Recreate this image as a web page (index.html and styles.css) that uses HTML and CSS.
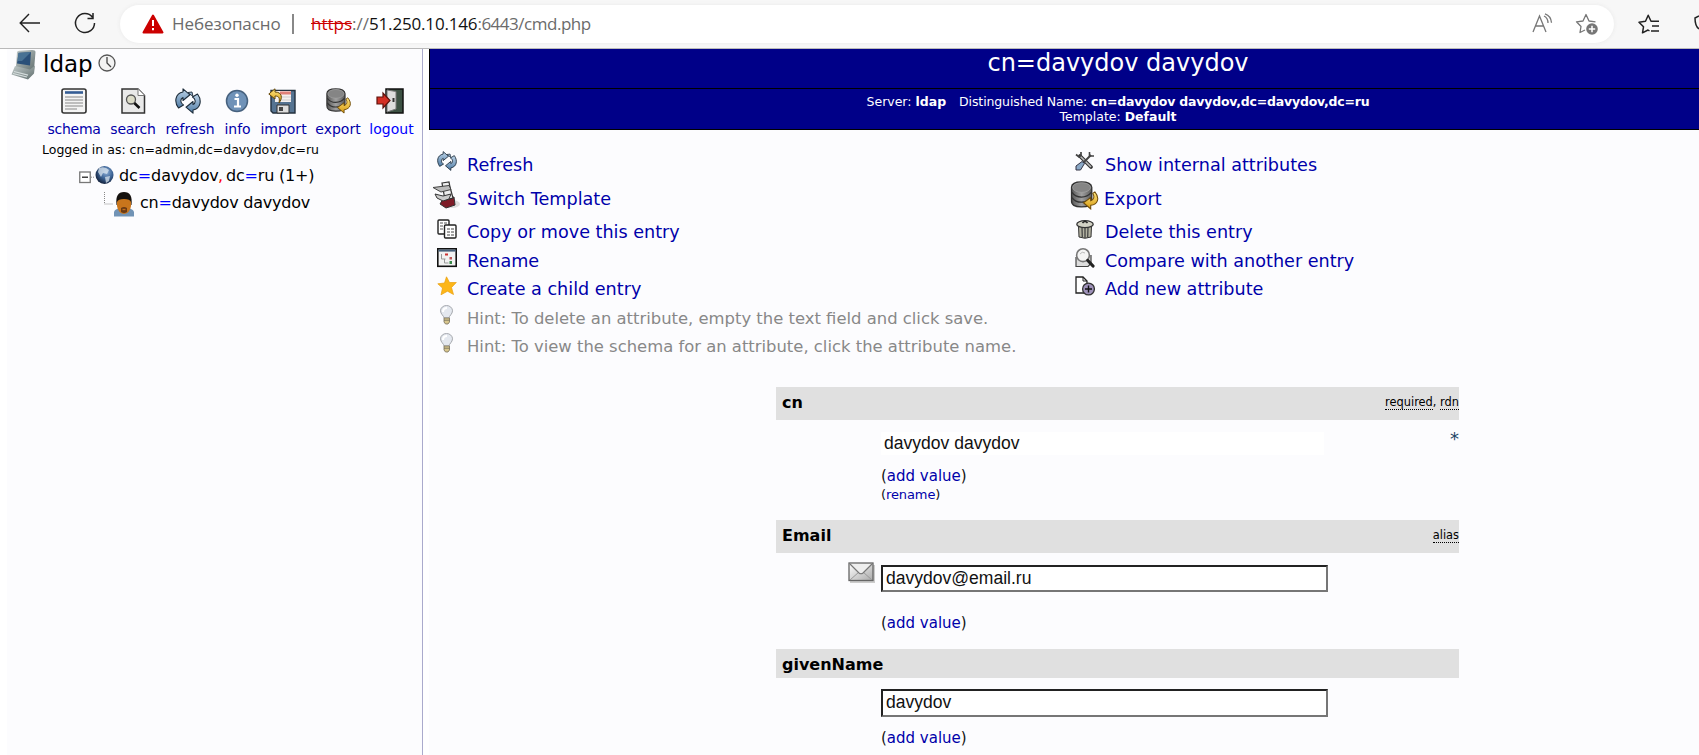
FILE: index.html
```html
<!DOCTYPE html>
<html lang="ru">
<head>
<meta charset="utf-8">
<title>phpLDAPadmin</title>
<link rel="stylesheet" href="styles.css">
</head>
<body>
<svg class="defs" width="0" height="0">
  <defs>
    <linearGradient id="steel" x1="0" y1="0" x2="0" y2="1"><stop offset="0" stop-color="#bdd4e8"/><stop offset="1" stop-color="#4f7ba5"/></linearGradient>
    <linearGradient id="drum" x1="0" y1="0" x2="1" y2="0"><stop offset="0" stop-color="#555"/><stop offset=".5" stop-color="#a0a0a0"/><stop offset="1" stop-color="#5a5a5a"/></linearGradient>
    <linearGradient id="gold" x1="0" y1="0" x2="0" y2="1"><stop offset="0" stop-color="#ffe680"/><stop offset="1" stop-color="#d69a10"/></linearGradient>
    <linearGradient id="silver" x1="0" y1="0" x2="1" y2="1"><stop offset="0" stop-color="#fff"/><stop offset="1" stop-color="#aaa"/></linearGradient>
    <linearGradient id="case" x1="0" y1="0" x2="1" y2="1"><stop offset="0" stop-color="#c3cccb"/><stop offset="1" stop-color="#5f6d6d"/></linearGradient>
    <radialGradient id="earth" cx=".6" cy=".35" r=".7"><stop offset="0" stop-color="#8fb0d8"/><stop offset=".5" stop-color="#3d6496"/><stop offset="1" stop-color="#101c34"/></radialGradient>
    <symbol id="refresh" viewBox="0 0 26 26">
      <path d="M3.500 20C-1 14 0 5.500 8 4V.8l7 6-7 5.700V9.500C5 11 5 15 8.500 17Z" fill="url(#steel)" stroke="#1d2c3a" stroke-width="1.100" stroke-linejoin="round"/>
      <path d="M13 4.500l5 4-1-4.500Z" fill="#9db9d2" stroke="#1d2c3a" stroke-width=".9"/>
      <path d="M22.500 6C27 12 26 20.500 18 22v3.200l-7-6 7-5.700v3c3-1.500 3-5.500-.5-7.500Z" fill="url(#steel)" stroke="#1d2c3a" stroke-width="1.100" stroke-linejoin="round"/>
    </symbol>
    <symbol id="export" viewBox="0 0 28 28">
      <path d="M1.500 6Q1.500 1 11 1T21 6V19Q21 25 11 25T1.500 19Z" fill="url(#drum)" stroke="#333" stroke-width="1.300"/>
      <ellipse cx="11.200" cy="6.300" rx="8.700" ry="4.700" fill="#858585" stroke="#aaa" stroke-width=".6"/>
      <path d="M2 11Q5 15.500 11 15.500T20.500 11M2 16Q5 20.500 11 20.500T20 16" fill="none" stroke="#333" stroke-width="1.200"/>
      <path d="M24 10.500c5 6 3 12-4 13v3.500l-7-6 7-5v3c3-1 4-4 2-7Z" fill="url(#gold)" stroke="#6e4b08" stroke-width="1"/>
    </symbol>
    <symbol id="bulb" viewBox="0 0 16 20">
      <path d="M5 13C5 11 1.500 9 1.500 5.800a6 5.300 0 0 1 12 0C13.500 9 10 11 10 13Z" fill="#e4e8ef" stroke="#a6a9ae"/>
      <path d="M4 7q0-4 4-4" stroke="#fff" stroke-width="2" fill="none"/>
      <path d="M5 13h5.500v4L9 19H6.500L5 17Z" fill="#d8c68e" stroke="#77705a" stroke-width=".8"/>
      <path d="M5 15.200h5.500" stroke="#6f6a58" stroke-width=".8"/>
    </symbol>
  </defs>
</svg>

<header class="toolbar">
  <svg class="tool-back" width="22" height="20" viewBox="0 0 22 20"><path d="M21 10H1.500M10 1L1.200 10 10 19" fill="none" stroke="#222" stroke-width="1.400"/></svg>
  <svg class="tool-reload" width="24" height="24" viewBox="0 0 24 24"><path d="M19.500 6.200A9.500 9.500 0 1 0 21.500 12M20 2v5.400h-5.500" fill="none" stroke="#222" stroke-width="1.500"/></svg>
  <div class="address">
    <svg class="warn" width="22" height="20" viewBox="0 0 22 20"><path d="M11 1.500L20.500 18.500H1.500Z" fill="#c00" stroke="#c00" stroke-width="2" stroke-linejoin="round"/><path d="M11 6v6M11 14v2.200" stroke="#fff" stroke-width="2"/></svg>
    <span class="insecure">Небезопасно</span>
    <span class="divider"></span>
    <span class="url"><span class="scheme">https</span><span class="sep">://</span><span class="host">51.250.10.146</span><span class="path">:6443/cmd.php</span></span>
    <svg class="read" width="22" height="22" viewBox="0 0 22 22"><path d="M1 19L7.500 3 14 19M3.500 13h8M12 3q4 2 4 7M13 .8q6 2 6.500 9" fill="none" stroke="#777" stroke-width="1.300"/></svg>
    <svg class="fav" width="24" height="24" viewBox="0 0 24 24"><path d="M10 18L5 20.500l1-6L1.500 9.800 8 9l3-6.500L14 9l6.500.8" fill="none" stroke="#777" stroke-width="1.300" stroke-linejoin="round"/><circle cx="17" cy="17" r="5.800" fill="#767676"/><path d="M17 13.800v6.400M13.800 17h6.400" stroke="#fff" stroke-width="1.500"/></svg>
  </div>
  <svg class="favs" width="22" height="20" viewBox="0 0 22 20"><path d="M11.500 17L10 16l-5.500 2.800 1-6L1 8.200 7.500 7.300 10.200 1.300 13 7.300h8M14 12h7M13 17h8" fill="none" stroke="#222" stroke-width="1.500" stroke-linejoin="round"/></svg>
  <svg class="cut" width="5" height="20" viewBox="0 0 5 20"><path d="M5 2L1 4c0 6 1 9 4 11" fill="none" stroke="#222" stroke-width="1.500"/></svg>
</header>

<div class="page">
  <nav class="tree">
    <div class="server">
      <svg width="28" height="31" viewBox="0 0 28 31"><path d="M6 3Q7 1.500 9 1.800L21 1q3.500 0 3.500 2L23 21l-5 1L5 18Z" fill="url(#case)"/><path d="M7.500 3.800L20 3l-1 13.500L6 14.500Z" fill="#2a5079"/><path d="M7.500 4L20 3l-9 9-4.500 0Z" fill="#55809f" opacity=".7"/><path d="M4 17l15 3.500 5-4-1 8-6 6L.5 25.500Z" fill="url(#case)"/><path d="M3 22.500l14 3.700M2 24.500l14 3.500" stroke="#d5dddd" stroke-width="1.200"/></svg>
      <span class="server-name">ldap</span>
      <svg class="clock" width="18" height="18" viewBox="0 0 18 18"><circle cx="9" cy="9" r="8" fill="#f3f3f3" stroke="#555" stroke-width="1.300"/><path d="M9 3v6l4 4" fill="none" stroke="#444" stroke-width="1.300"/></svg>
    </div>
    <div class="actions">
      <a class="act a1"><svg width="26" height="26" viewBox="0 0 26 26"><rect x="1" y="1" width="24" height="24" rx="2" fill="#f4f4f4" stroke="#333" stroke-width="1.600"/><path d="M4 4.500h18" stroke="#345c94" stroke-width="2.600"/><path d="M4 9h18M4 12h18M4 15h18M4 18h18M4 21h12" stroke="#888" stroke-width="1.200"/></svg><span>schema</span></a>
      <a class="act a2"><svg width="26" height="26" viewBox="0 0 26 26"><path d="M2 1H18L24.500 7.500V25H2Z" fill="#e9e9e9" stroke="#333" stroke-width="1.500"/><path d="M18 1v6.500h6.500" fill="#fff" stroke="#777"/><circle cx="11" cy="11.500" r="4.500" fill="#dcdcc8" stroke="#555" stroke-width="1.300"/><path d="M14.300 15l5.200 5" stroke="#111" stroke-width="2.600"/></svg><span>search</span></a>
      <a class="act a3"><svg width="26" height="26"><use href="#refresh"/></svg><span>refresh</span></a>
      <a class="act a4"><svg width="26" height="26" viewBox="0 0 26 26"><circle cx="13" cy="13" r="10.500" fill="#6f92b8" stroke="#46617e" stroke-width="1.500"/><path d="M10.500 11H14v7M10 18.500h7" fill="none" stroke="#fff" stroke-width="2.200"/><circle cx="13" cy="7.200" r="1.700" fill="#fff"/></svg><span>info</span></a>
      <a class="act a5"><svg width="28" height="26" viewBox="0 0 28 26"><path d="M3 2.500H27V25H5L3 23Z" fill="#557391" stroke="#23303e" stroke-width="1.400"/><path d="M7 3h16v11H7Z" fill="#f5f0ee"/><path d="M12 5h11" stroke="#e08078" stroke-width="3"/><path d="M12 9h11M12 12h11" stroke="#ccc"/><path d="M9 17h12v8H9Z" fill="#ddd" stroke="#333"/><path d="M11 19h4v4h-4Z" fill="#444"/><path d="M7 .8L.8 6 7 11V8c4 0 5 2 4 7 4-5 3-11-4-11Z" fill="url(#gold)" stroke="#634708"/></svg><span>import</span></a>
      <a class="act a6"><svg width="27" height="26"><use href="#export"/></svg><span>export</span></a>
      <a class="act a7"><svg width="28" height="26" viewBox="0 0 28 26"><path d="M10 1H27V25H10Z" fill="#3c5143" stroke="#111" stroke-width="1.500"/><path d="M11 2l9 1.500V21L11 24Z" fill="#ddd" stroke="#777"/><path d="M17.500 10v4" stroke="#333" stroke-width="2"/><path d="M1 9h6V5l7 7.500L7 20v-4H1Z" fill="#d32f24" stroke="#5c120c" stroke-width="1.200"/></svg><span>logout</span></a>
    </div>
    <div class="logged">Logged in as: cn=admin,dc=davydov,dc=ru</div>
    <div class="node root">
      <svg width="35" height="22" viewBox="0 0 35 22"><rect x=".75" y="6" width="10.500" height="10.500" fill="#fff" stroke="#777" stroke-width="1.300"/><path d="M3 11.200h6" stroke="#222" stroke-width="1.300"/><path d="M12 11.200h4" stroke="#888" stroke-dasharray="1 1"/><circle cx="25.500" cy="9" r="9" fill="url(#earth)"/><path d="M20 2q6-2 10 2l-2 4-4-1-2 4-3-5ZM26 11l5-1-1 5-3 2Z" fill="#dbe6ef" opacity=".75"/></svg>
      <span class="t1">dc<i>=</i>davydov</span><span class="comma">,</span><span class="t2">dc<i>=</i>ru (1+)</span>
    </div>
    <div class="node child">
      <svg width="31" height="26" viewBox="0 0 31 26"><path d="M.5 0v12H9" fill="none" stroke="#888" stroke-dasharray="1 1"/><path d="M10 24.500V20q1-3.500 6-3.500h8q5 0 6 3.500v4.500Z" fill="#7193b5"/><path d="M12.500 13Q11 0 20 0t7.500 13Z" fill="#15110e"/><path d="M13 10q1-3 7-3t7 3v4q-1 7-7 8-6-1-7-8Z" fill="#c8751c"/><path d="M17 16q3-2 6 0v4q-3 2-6 0Z" fill="#6a3a14"/><path d="M18.500 17.500h3" stroke="#c3701d" stroke-width="1.300"/></svg>
      <span class="t3">cn<i>=</i>davydov davydov</span>
    </div>
  </nav>

  <main class="entry">
    <h1>cn=davydov davydov</h1>
    <div class="sub">
      <div><span class="s1">Server: <b>ldap</b></span><span class="s2">Distinguished Name: <b>cn=davydov davydov,dc=davydov,dc=ru</b></span></div>
      <div><span>Template: <b>Default</b></span></div>
    </div>
    <div class="menu">
      <ul>
        <li class="r1"><svg width="20" height="20"><use href="#refresh"/></svg><a>Refresh</a></li>
        <li class="r2"><svg width="30" height="28" viewBox="0 0 30 28"><ellipse cx="20" cy="23" rx="8" ry="4" fill="#ddd"/><path d="M11 18l11-2 1 8-9 3-6-4Z" fill="#7e1c28" stroke="#333"/><path d="M10 2l7-1 1 5 3 11-8 2Z" fill="#eee" stroke="#333" stroke-width="1.200"/><path d="M1 6.500l16-2 2 4-10 2.500Z" fill="#bbb" stroke="#444"/><path d="M3 13l8 2 8-2-2 5-6 2-6-3Z" fill="#ccc" stroke="#333"/></svg><a>Switch Template</a></li>
        <li class="r3"><svg width="20" height="20" viewBox="0 0 20 20"><rect x="1" y="1" width="11" height="14" rx="1" fill="#fff" stroke="#222" stroke-width="1.400"/><path d="M3 4h3M7 4h3M3 7h3M3 10h3" stroke="#555"/><rect x="7.500" y="6" width="11.500" height="13" rx="1" fill="#fff" stroke="#222" stroke-width="1.400"/><path d="M10 10h3M14 10h3M10 13h3M14 13h3M10 16h3M14 16h3" stroke="#444"/></svg><a>Copy or move this entry</a></li>
        <li class="r4"><svg width="20" height="20" viewBox="0 0 20 20"><rect x=".8" y=".8" width="18.400" height="17.500" fill="#f2f2f2" stroke="#111" stroke-width="1.600"/><path d="M1.500 2.600h17" stroke="#47617c" stroke-width="2"/><path d="M4.500 6v5h4M7.500 11v4h4" fill="none" stroke="#999"/><path d="M8 5.500h3v2H8Z" fill="#c33"/><path d="M12.500 9h2.500v2.500h-2.500Z" fill="#b55"/><path d="M12.500 13h2.500v3h-2.500Z" fill="#3a8a4a"/></svg><a>Rename</a></li>
        <li class="r5"><svg width="20" height="20" viewBox="0 0 20 20"><path d="M9.500 .8L12.500 6.500 19.300 6.500 14.500 11.500 16.500 18.500 10.500 15.200 4 18.800 5.500 12 .8 7.800 7.500 7Z" fill="#fdb618" stroke="#e89f10" stroke-width=".7"/></svg><a>Create a child entry</a></li>
        <li class="hint"><svg width="16" height="20"><use href="#bulb"/></svg><span>Hint: To delete an attribute, empty the text field and click save.</span></li>
        <li class="hint"><svg width="16" height="20"><use href="#bulb"/></svg><span>Hint: To view the schema for an attribute, click the attribute name.</span></li>
      </ul>
      <ul>
        <li class="r1"><svg width="20" height="20" viewBox="0 0 20 20"><path d="M5 5l11 11" stroke="#333" stroke-width="3.800" stroke-linecap="round"/><path d="M5 5l11 11" stroke="#bbb" stroke-width="1.600"/><path d="M1 3.500l3 2.500 2-1.500V1" fill="none" stroke="#444" stroke-width="1.700"/><path d="M16 4L8 12" stroke="#444" stroke-width="2"/><path d="M14.500 1v4h4.500" fill="none" stroke="#444" stroke-width="1.600"/><path d="M7 10.500l2.500 2-4 6.500H1v-4Z" fill="#8aa8c6" stroke="#334"/></svg><a>Show internal attributes</a></li>
        <li class="r2"><svg width="29" height="29"><use href="#export"/></svg><a>Export</a></li>
        <li class="r3"><svg width="20" height="20" viewBox="0 0 20 20"><path d="M3.500 7h13l-.5 11q-6 2.500-12 0Z" fill="#b3b2a1" stroke="#333"/><path d="M7 9l.3 9M10 9v10M13 9l-.3 9" stroke="#444" stroke-width="1.300"/><ellipse cx="10" cy="5.200" rx="8.200" ry="3.500" fill="#d3d2c5" stroke="#333" stroke-width="1.300"/><path d="M7.500 4q2.500-3 5 0" fill="none" stroke="#222" stroke-width="1.600"/></svg><a>Delete this entry</a></li>
        <li class="r4"><svg width="20" height="20" viewBox="0 0 20 20"><path d="M1 9v9.500h12l3-3V7" fill="#ddd" stroke="#444" stroke-width="1.200"/><circle cx="8" cy="7.200" r="6.400" fill="#f4f4f4" stroke="#777" stroke-width="1.600"/><path d="M5 6q2-3 5-1" stroke="#bbb" fill="none"/><path d="M12.800 12.500l5.200 5.500" stroke="#222" stroke-width="3.200" stroke-linecap="round"/></svg><a>Compare with another entry</a></li>
        <li class="r5"><svg width="20" height="20" viewBox="0 0 20 20"><path d="M1 1h7l4 4v12H1Z" fill="#fff" stroke="#222" stroke-width="1.300"/><path d="M8 1v4h4" fill="none" stroke="#222"/><circle cx="13.500" cy="13" r="5.900" fill="#9d90b8" stroke="#333" stroke-width="1.300"/><path d="M13.500 9.500v7M10 13h7" stroke="#111" stroke-width="1.400"/></svg><a>Add new attribute</a></li>
      </ul>
    </div>

    <form class="attrs">
      <div class="bar"><b>cn</b><span class="notes"><abbr>required</abbr>, <abbr>rdn</abbr></span></div>
      <div class="body b1">
        <div class="field"><span class="ro">davydov davydov</span><span class="star">*</span></div>
        <div class="add">(<a>add value</a>)</div>
        <div class="ren">(<a>rename</a>)</div>
      </div>
      <div class="bar"><b>Email</b><span class="notes"><abbr>alias</abbr></span></div>
      <div class="body b2">
        <div class="field"><svg class="mail" width="27" height="22" viewBox="0 0 27 22"><rect x="2" y="3" width="25" height="18" fill="#ccc"/><rect x="1" y="1" width="24" height="17.500" fill="url(#silver)" stroke="#666" stroke-width="1.300"/><path d="M2 18l9-8M24 18l-9-8" stroke="#999"/><path d="M2 2l9 9q2 1.500 4 0l9-9" fill="#eee" stroke="#777" stroke-width="1.200"/></svg><span class="input">davydov@email.ru</span></div>
        <div class="add">(<a>add value</a>)</div>
      </div>
      <div class="bar short"><b>givenName</b></div>
      <div class="body b3">
        <div class="field"><span class="input">davydov</span></div>
        <div class="add">(<a>add value</a>)</div>
      </div>
    </form>
  </main>
</div>
</body>
</html>
```
FILE: styles.css
```css
* { box-sizing: border-box; }
body { margin: 0; width: 1699px; height: 755px; overflow: hidden; background: #fff; font-family: "DejaVu Sans", Verdana, sans-serif; font-size: 16px; color: #000; }
.defs { position: absolute; }
svg { display: block; flex: none; }
span, a, b { white-space: pre; }

/* browser toolbar */
.toolbar { display: flex; align-items: center; height: 49px; padding-left: 19px; background: #f7f7f7; border-bottom: 1px solid #b9b9b9; }
.tool-back { margin-bottom: 2px; }
.tool-reload { margin: 0 0 2px 32px; }
.address { display: flex; align-items: center; width: 1495px; height: 38px; margin-left: 23px; padding-left: 22px; border-radius: 19px; background: #fff; box-shadow: 0 0 4px #e9e9e9; font-family: "Open Sans", "Noto Sans", sans-serif; font-size: 17px; line-height: 36px; color: #6b6b6b; }
.insecure { width: 105px; margin-left: 8px; letter-spacing: -0.05px; }
.divider { width: 2px; height: 20px; margin-left: 15px; background: #888; }
.url { width: 280px; margin-left: 17px; }
.scheme { color: #c00; text-decoration: line-through; }
.host { color: #111; letter-spacing: -0.17px; }
.path { letter-spacing: -0.48px; }
.read { margin-left: 941px; }
.fav { margin-left: 21px; }
.favs { margin-left: 24px; }
.cut { margin-left: 34px; }

.page { display: flex; height: 706px; }

/* server tree */
.tree { width: 416px; margin-left: 7px; background: #fcfcfe; border-right: 1px solid #aac; }
.server { display: flex; height: 34px; padding-left: 4px; }
.server-name { width: 49px; margin-left: 4px; font-size: 23px; line-height: 31px; }
.clock { margin: 5px 0 0 6px; }
.actions { display: flex; height: 59px; padding-left: 41px; color: #00a; font-size: 14px; }
.act { display: flex; flex-direction: column; align-items: center; padding-top: 5px; }
.act span { line-height: 17px; margin-top: 7px; }
.a1 { width: 52px; letter-spacing: -0.25px; }
.a2 { width: 44px; margin-left: 11px; letter-spacing: -0.2px; }
.a3 { width: 48px; margin-left: 11px; }
.a3 svg { position: relative; left: -2px; }
.a4 { width: 25px; margin-left: 11px; }
.a4 svg { position: relative; left: -1px; }
.a5 { width: 45px; margin-left: 11px; }
.a5 svg { position: relative; left: -2px; }
.a6 { width: 44px; margin-left: 10px; }
.a7 { width: 43px; margin-left: 10px; color: #00f; }
.a7 svg { position: relative; left: -2px; }
.logged { height: 17px; padding-left: 35px; font-size: 12.500px; line-height: 15px; white-space: pre; }
.node { display: flex; font-size: 16px; }
.node i { font-style: normal; color: #00f; }
.root { height: 33px; padding: 7px 0 0 72px; line-height: 19px; }
.t1 { margin-left: 5px; width: 99px; letter-spacing: -0.1px; }
.comma { color: red; width: 8px; }
.t2 { letter-spacing: -0.2px; }
.child { height: 27px; padding-left: 97px; line-height: 21px; }
.t3 { margin-left: 5px; letter-spacing: -0.23px; }

/* entry */
.entry { width: 1270px; margin-left: 6px; background: #fcfcfe; }
h1 { margin: 0; height: 40px; padding-left: 107px; background: #008; border-left: 1px solid #000; border-bottom: 1px solid #000; color: #fff; text-align: center; font-weight: normal; font-size: 24px; line-height: 29px; }
.sub { height: 41px; padding: 5px 0 0 107px; background: #008; border-left: 1px solid #000; border-bottom: 1px solid #000; color: #fff; text-align: center; font-size: 12.500px; line-height: 15px; }
.s1 { margin-right: 13px; }
.s2 { letter-spacing: -0.12px; }
.s2 b { letter-spacing: -0.2px; }
.menu { display: flex; height: 257px; padding-top: 15px; font-size: 17.600px; }
.menu ul { width: 632px; margin: 0; padding: 0; list-style: none; }
.menu ul:first-child { width: 638px; flex: none; }
.menu li { display: flex; height: 28px; padding-left: 8px; line-height: 26px; color: #00a; }
.menu li svg { margin-right: 10px; }
.menu .r1 { height: 34px; padding-top: 7px; }
.menu .r1 svg { margin-top: -1px; }
.menu .r2 { height: 37px; padding-top: 7px; }
.menu .r2 svg { margin: -5px 5px 0 -5px; }
.menu .r3 { height: 29px; padding-top: 3px; }
.menu .r4 { padding-top: 3px; }
.menu .r5 { padding-top: 3px; }
.menu .hint { padding-top: 4px; color: #888; font-size: 16.420px; line-height: 28px; }
.menu .hint svg { margin: 0 12px 0 2px; }

.attrs { width: 683px; margin-left: 347px; }
.bar { display: flex; justify-content: space-between; height: 33px; padding-left: 6px; background: #e0e0e0; line-height: 31px; }
.short { height: 29px; }
.notes { font-size: 11.400px; }
abbr { border-bottom: 1px dotted #000; }
.body { height: 100px; padding-left: 105px; color: #111; }
.body a { color: #00a; }
.b2 { height: 96px; }
.field { display: flex; position: relative; justify-content: space-between; height: 46px; padding-top: 12px; font-family: "Liberation Sans", Arial, sans-serif; font-size: 17.550px; }
.ro { width: 443px; height: 23px; padding-left: 3px; background: #fff; line-height: 22px; }
.star { font-family: "DejaVu Sans", sans-serif; font-size: 18px; color: #246; line-height: 14px; }
.input { width: 447px; height: 27px; padding-left: 3px; border: 2px solid; border-color: #222 #767676 #767676 #222; background: #fff; line-height: 23px; }
.mail { position: absolute; left: -33px; top: 9px; }
.add { font-size: 15px; line-height: 20px; }
.ren { font-size: 13px; line-height: 17px; letter-spacing: -0.1px; }
.b2 .field { height: 60px; }
.b3 .field { height: 50px; padding-top: 11px; }
.b3 .input { height: 28px; }
```
